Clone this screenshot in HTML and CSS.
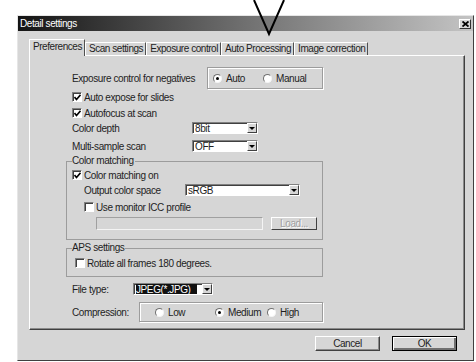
FILE: index.html
```html
<!DOCTYPE html>
<html lang="en">
<head>
  <meta charset="UTF-8">
  <title>Detail settings</title>
  <link rel="stylesheet" href="styles.css">
</head>
<body>

  <!-- callout pointing at the Auto Processing tab -->
  <svg class="pointer" width="476" height="40" viewBox="0 0 476 40">
    <polyline points="254,0 269,34 284,0" fill="none" stroke="#000" stroke-width="2"/>
  </svg>

  <div class="dialog">
    <div class="titlebar">
      <span class="title">Detail settings</span>
      <span class="close">
        <svg width="7" height="6" viewBox="0 0 7 6"><path d="M0.5 0.5 L6.5 5.5 M6.5 0.5 L0.5 5.5" stroke="#000" stroke-width="1.8"/></svg>
      </span>
    </div>

    <div class="tabs">
      <div class="tab active">Preferences</div>
      <div class="tab">Scan settings</div>
      <div class="tab">Exposure control</div>
      <div class="tab">Auto Processing</div>
      <div class="tab">Image correction</div>
    </div>

    <div class="panel">
      <div class="row exposure">
        <span class="label label-wide">Exposure control for negatives</span>
        <div class="radiobox exposure-box">
          <span class="option opt-auto"><i class="radio on"></i>Auto</span>
          <span class="option"><i class="radio"></i>Manual</span>
        </div>
      </div>

      <div class="row"><i class="check on"><svg width="7" height="7" viewBox="0 0 7 7"><polyline points="0.5,3 2.5,5.5 6.5,0.8" fill="none" stroke="#000" stroke-width="1.6"/></svg></i>Auto expose for slides</div>
      <div class="row"><i class="check on"><svg width="7" height="7" viewBox="0 0 7 7"><polyline points="0.5,3 2.5,5.5 6.5,0.8" fill="none" stroke="#000" stroke-width="1.6"/></svg></i>Autofocus at scan</div>

      <div class="row row-select">
        <span class="label">Color depth</span>
        <div class="select sel-short"><span class="value">8bit</span><span class="arrow"></span></div>
      </div>
      <div class="row row-select spaced">
        <span class="label">Multi-sample scan</span>
        <div class="select sel-short"><span class="value">OFF</span><span class="arrow"></span></div>
      </div>

      <fieldset class="group color-group">
        <legend>Color matching</legend>
        <div class="row"><i class="check on"><svg width="7" height="7" viewBox="0 0 7 7"><polyline points="0.5,3 2.5,5.5 6.5,0.8" fill="none" stroke="#000" stroke-width="1.6"/></svg></i>Color matching on</div>
        <div class="row row-select indent">
          <span class="label label-sub">Output color space</span>
          <div class="select sel-long"><span class="value">sRGB</span><span class="arrow"></span></div>
        </div>
        <div class="row indent gap"><i class="check"></i>Use monitor ICC profile</div>
        <div class="row row-field">
          <div class="field"></div>
          <div class="btn-small">Load...</div>
        </div>
      </fieldset>

      <fieldset class="group aps-group">
        <legend>APS settings</legend>
        <div class="row rotate"><i class="check"></i>Rotate all frames 180 degrees.</div>
      </fieldset>

      <div class="row filetype">
        <span class="label label-short">File type:</span>
        <div class="select sel-file"><span class="value"><b>JPEG(*.JPG)</b></span><span class="arrow"></span></div>
      </div>

      <div class="row compression">
        <span class="label label-mid">Compression:</span>
        <div class="radiobox compression-box">
          <span class="option opt-low"><i class="radio"></i>Low</span>
          <span class="option opt-medium"><i class="radio on"></i>Medium</span>
          <span class="option"><i class="radio"></i>High</span>
        </div>
      </div>
    </div>

    <div class="buttons">
      <div class="btn">Cancel</div>
      <div class="btn default">OK</div>
    </div>
  </div>

</body>
</html>
```

FILE: styles.css
```css
* {
  box-sizing: border-box;
}

body {
  margin: 0;
  background: #fff;
  font-family: "Liberation Sans", Arial, sans-serif;
  font-size: 10px;
  letter-spacing: -0.4px;
  color: #1e1e1e;
}

.pointer {
  position: absolute;
  left: 0;
  top: 0;
  z-index: 2;
}

.dialog {
  margin: 15px 0 0 17px;
  width: 457px;
  height: 346px;
  background: #d6d6d6;
  border: 1px solid;
  border-color: #e6e6e6 #404040 #404040 #e6e6e6;
}

.titlebar {
  display: flex;
  align-items: center;
  justify-content: space-between;
  height: 15px;
  padding: 0 2px 0 2px;
  background: linear-gradient(to right, #141414, #707070 50%, #c4c4c4);
  color: #fff;
}

.close {
  display: flex;
  align-items: center;
  justify-content: center;
  width: 12px;
  height: 10px;
  background: #d6d6d6;
  border: 1px solid;
  border-color: #fff #303030 #303030 #fff;
}

/* tabs */
.tabs {
  display: flex;
  align-items: flex-end;
  height: 16px;
  margin: 8px 0 0 11px;
}

.tab {
  height: 13px;
  line-height: 12px;
  padding: 0 2px 0 3px;
  letter-spacing: -0.45px;
  border-left: 1px solid #fff;
  border-top: 1px solid #fff;
  border-right: 1px solid #505050;
}

.tab.active {
  position: relative;
  z-index: 1;
  height: 17px;
  line-height: 13px;
  margin-bottom: -1px;
  background: #d6d6d6;
}

.panel {
  margin-left: 11px;
  width: 436px;
  height: 275px;
  padding-left: 42px;
  border: 1px solid;
  border-color: #fff #404040 #404040 #fff;
  box-shadow: inset -1px -1px #8a8a8a;
}

/* rows */
.row {
  display: flex;
  align-items: center;
  height: 16px;
  white-space: nowrap;
}

.row.exposure {
  height: 22px;
  margin-top: 11px;
}

.row-select {
  height: 14px;
}

.row.spaced {
  margin-top: 4px;
}

.row.indent {
  padding-left: 12px;
}

.row.gap {
  margin-top: 2px;
}

.row-field {
  height: 13px;
  margin-top: 2px;
  padding-left: 24px;
}

.row.rotate {
  margin-top: 1px;
  padding-left: 3px;
}

.row.filetype {
  margin-top: 4px;
}

.row.compression {
  height: 20px;
  margin-top: 5px;
}

.label {
  width: 120px;
}

.label-wide {
  width: 135px;
}

.label-sub {
  width: 101px;
}

.label-short {
  width: 61px;
}

.label-mid {
  width: 67px;
}

/* check boxes and radios */
.check {
  display: flex;
  align-items: center;
  justify-content: center;
  width: 10px;
  height: 10px;
  margin-right: 2px;
  background: #fff;
  border: 1px solid;
  border-color: #808080 #fff #fff #808080;
  box-shadow: inset 1px 1px #404040;
}

.check svg {
  margin: 1px 0 0 1px;
}

.radio {
  position: relative;
  width: 9px;
  height: 9px;
  margin-right: 4px;
  border-radius: 50%;
  background: #fff;
  border: 1px solid;
  border-color: #707070 #f4f4f4 #f4f4f4 #707070;
}

.radio.on::after {
  content: "";
  position: absolute;
  left: 2px;
  top: 2px;
  width: 3px;
  height: 3px;
  border-radius: 50%;
  background: #000;
}

.radiobox {
  display: flex;
  align-items: center;
  height: 100%;
  border: 1px solid #9c9c9c;
  box-shadow: inset 1px 1px #fff, 1px 1px #fff;
}

.exposure-box {
  width: 116px;
  padding-left: 5px;
}

.opt-auto {
  width: 50px;
}

.compression-box {
  width: 184px;
  padding-left: 15px;
}

.opt-low {
  width: 60px;
}

.opt-medium {
  width: 52px;
}

.option {
  display: flex;
  align-items: center;
}

/* drop-down lists */
.select {
  display: flex;
  height: 12px;
  background: #fff;
  border: 1px solid;
  border-color: #808080 #fff #fff #808080;
  box-shadow: inset 1px 1px #404040;
}

.select .value {
  flex: 1;
  padding: 1px 0 0 2px;
  line-height: 9px;
  overflow: hidden;
}

.select .value b {
  font-weight: normal;
  background: #111;
  color: #fff;
  padding-right: 6px;
}

.select .arrow {
  display: flex;
  align-items: center;
  justify-content: center;
  width: 10px;
  height: 10px;
  background: #d6d6d6;
  border: 1px solid;
  border-color: #fff #404040 #404040 #fff;
}

.select .arrow::after {
  content: "";
  border-left: 3px solid transparent;
  border-right: 3px solid transparent;
  border-top: 3px solid #000;
}

.sel-short {
  width: 66px;
}

.sel-long {
  width: 115px;
}

.sel-file {
  width: 80px;
}

/* group boxes */
.group {
  margin: 2px 0 0 -6px;
  min-width: 0;
  width: 257px;
  padding: 0 0 9px 5px;
  border: 1px solid #9c9c9c;
}

.group legend {
  height: 12px;
  line-height: 12px;
  padding: 0 1px 0 0;
}

.aps-group {
  padding-bottom: 5px;
}

.field {
  width: 167px;
  height: 13px;
  border: 1px solid;
  border-color: #a0a0a0 #f4f4f4 #f4f4f4 #a0a0a0;
}

.btn-small {
  width: 46px;
  height: 13px;
  margin-left: 8px;
  line-height: 11px;
  text-align: center;
  color: #a0a0a0;
  text-shadow: 1px 1px #fff;
  border: 1px solid;
  border-color: #fff #404040 #404040 #fff;
}

/* dialog buttons */
.buttons {
  display: flex;
  justify-content: flex-end;
  gap: 12px;
  margin-top: 6px;
  padding-right: 16px;
}

.btn {
  width: 65px;
  height: 15px;
  line-height: 13px;
  text-align: center;
  border: 1px solid;
  border-color: #fff #404040 #404040 #fff;
  box-shadow: inset -1px -1px #8a8a8a;
}

.btn.default {
  border: 1px solid #000;
  box-shadow: inset 1px 1px #fff, inset -2px -2px #707070;
}
```
